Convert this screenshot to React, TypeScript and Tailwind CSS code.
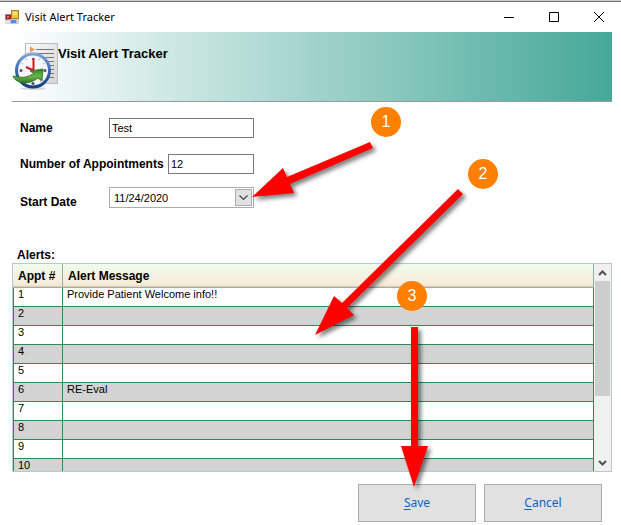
import { useState } from "react"

interface Alert {
  appt: number
  message: string
}

interface ArrowProps {
  points: string
}

const initialAlerts: Alert[] = [
  { appt: 1, message: "Provide Patient Welcome info!!" },
  { appt: 2, message: "" },
  { appt: 3, message: "" },
  { appt: 4, message: "" },
  { appt: 5, message: "" },
  { appt: 6, message: "RE-Eval" },
  { appt: 7, message: "" },
  { appt: 8, message: "" },
  { appt: 9, message: "" },
  { appt: 10, message: "" },
]

function FormIcon() {
  return (
    <svg width="14" height="14" viewBox="0 0 14 14" shapeRendering="crispEdges" aria-hidden="true">
      <rect x="0" y="4" width="6" height="6" fill="#8f8f8f" />
      <rect x="1" y="5" width="5" height="4" fill="#c90c0c" />
      <rect x="2" y="6" width="2" height="2" fill="#e87a6a" />
      <rect x="6" y="0" width="8" height="9" fill="#a5862e" />
      <rect x="7" y="1" width="6" height="7" fill="#f7c52e" />
      <rect x="8" y="2" width="4" height="3" fill="#ffe27c" />
      <rect x="0" y="10" width="5" height="4" fill="#e0e0e0" />
      <rect x="5" y="9" width="7" height="5" fill="#b5c5dc" />
      <rect x="6" y="10" width="5" height="3" fill="#4d8ee8" />
      <rect x="12" y="9" width="2" height="5" fill="#d3d3d3" />
    </svg>
  )
}

function ClockIcon() {
  return (
    <svg width="46" height="48" viewBox="0 0 46 48" aria-hidden="true">
      <defs>
        <linearGradient id="paper" x1="0" y1="0" x2="1" y2="1">
          <stop offset="0" stopColor="#fafafa" />
          <stop offset="1" stopColor="#d4d4d4" />
        </linearGradient>
        <linearGradient id="rim" x1="0" y1="0" x2="0" y2="1">
          <stop offset="0" stopColor="#7ba3dc" />
          <stop offset="0.5" stopColor="#3e68ad" />
          <stop offset="1" stopColor="#163f85" />
        </linearGradient>
        <linearGradient id="sweep" x1="0" y1="0" x2="0" y2="1">
          <stop offset="0" stopColor="#2f7d24" />
          <stop offset="0.5" stopColor="#6db64c" />
          <stop offset="1" stopColor="#2c7a22" />
        </linearGradient>
      </defs>
      <rect x="13.5" y="1.5" width="32" height="40" fill="url(#paper)" stroke="#bdbdbd" />
      <path d="M18 4.500l5 3-5 3z" fill="#f09a4a" />
      <path d="M24 7.500h18M26 11.500h16M32 15.500h10M36 19.500h6M38 23.500h4M39 27.500h3M38 31.500h4M36 35.500h6" stroke="#777" />
      <ellipse cx="21" cy="46.500" rx="13" ry="1.500" fill="#000" opacity="0.15" />
      <circle cx="21" cy="28.500" r="16.500" fill="#f5f7fb" stroke="url(#rim)" strokeWidth="3" />
      <g fill="#555">
        <circle cx="21" cy="17" r="1" />
        <circle cx="33" cy="28.500" r="1.500" />
        <circle cx="21" cy="41.500" r="1.600" />
        <circle cx="9" cy="28.500" r="1.500" />
      </g>
      <path d="M27 18l1-1.500M31 22l1.500-1M15 18l-1-1.500M11 22l-1.500-1M14 39l-1 1.500M28 39l1 1.500" stroke="#aaa" />
      <path d="M21.500 16v12M14 25l7.500 3.500" fill="none" stroke="#d31324" strokeWidth="2" />
      <path d="M1 34l6 1c6 1 10-1 15-3.500l-4-2.500 13-2-1 12-4-3c-7 5-13 6-18 4-4-1-6-3-7-6z" fill="url(#sweep)" stroke="#23691c" strokeWidth="0.800" />
    </svg>
  )
}

function Arrow({ points }: ArrowProps) {
  return <polygon points={points} fill="#ff0000" />
}

export default function App() {
  const [name, setName] = useState("Test")
  const [count, setCount] = useState("12")
  const [startDate, setStartDate] = useState("11/24/2020")

  return (
    <div className="relative overflow-hidden border-t border-[#cfcfcf] bg-white font-['Liberation_Sans',Arial,sans-serif] text-[12px] leading-[14px] text-black">
      {/* Title bar */}
      <div className="flex h-[31px] items-center border-t border-[#707070] pl-[5px]">
        <FormIcon />
        <span className="ml-[6px] flex-1 font-['Noto_Sans','Open_Sans',sans-serif] text-[11px] leading-[16px]">Visit Alert Tracker</span>
        <button type="button" aria-label="Minimize" className="flex h-[28px] w-[45px] items-center justify-center">
          <svg width="10" height="10" viewBox="0 0 10 10" stroke="#000"><path d="M0 5.500h10" /></svg>
        </button>
        <button type="button" aria-label="Maximize" className="flex h-[28px] w-[45px] items-center justify-center">
          <svg width="10" height="10" viewBox="0 0 10 10" fill="none" stroke="#000"><path d="M0.500 0.500h9v9h-9z" /></svg>
        </button>
        <button type="button" aria-label="Close" className="flex h-[28px] w-[45px] items-center justify-center">
          <svg width="10" height="10" viewBox="0 0 10 10" stroke="#000"><path d="M0 0l10 10M10 0L0 10" /></svg>
        </button>
      </div>

      <div className="pr-[9px] pl-3">
        {/* Banner */}
        <header className="flex h-[70px] items-start border-b border-[#999] bg-linear-to-r/srgb from-white to-[#45a898] pt-[10px]">
          <ClockIcon />
          <h1 className="pt-[5px] text-[13px] leading-[14px] font-bold">Visit Alert Tracker</h1>
        </header>

        {/* Form */}
        <div className="flex w-[242px] flex-col gap-4 pt-4 pl-2">
          <div className="flex h-5 items-center justify-between">
            <label htmlFor="name" className="font-bold">Name</label>
            <input
              id="name"
              value={name}
              onChange={(e) => setName(e.target.value)}
              className="h-5 w-[145px] border border-[#7a7a7a] bg-white px-[2px] text-[11px] outline-none"
            />
          </div>
          <div className="flex h-5 items-center justify-between">
            <label htmlFor="count" className="font-bold whitespace-nowrap">Number of Appointments</label>
            <input
              id="count"
              value={count}
              onChange={(e) => setCount(e.target.value)}
              className="h-5 w-[86px] border border-[#7a7a7a] bg-white px-[2px] text-[11px] outline-none"
            />
          </div>
          <div className="-mt-[3px] flex h-[21px] items-start justify-between">
            <label htmlFor="start" className="pt-2 font-bold">Start Date</label>
            <div className="relative w-[145px]">
              <select
                id="start"
                value={startDate}
                onChange={(e) => setStartDate(e.target.value)}
                className="h-[21px] w-full appearance-none border border-[#abadb3] bg-white px-1 text-[11px] outline-none"
              >
                <option>11/24/2020</option>
              </select>
              <span className="pointer-events-none absolute top-[2px] right-[2px] flex h-[17px] w-[17px] items-center justify-center border border-[#adadad] bg-[#e1e1e1]">
                <svg width="9" height="6" viewBox="0 0 9 6" fill="none" stroke="#444" strokeWidth="1.200"><path d="M0.500 0.500l4 4 4-4" /></svg>
              </span>
            </div>
          </div>
        </div>

        {/* Alerts */}
        <h2 id="alerts" className="mt-[39px] pl-[5px] text-[12px] leading-4 font-bold">Alerts:</h2>
        <div className="flex h-[209px] overflow-hidden border border-[#b9c7d6]">
          <div className="min-w-0 flex-1 overflow-hidden">
            <table aria-labelledby="alerts" className="w-full table-fixed border-separate border-spacing-0 text-left">
              <thead>
                <tr className="h-6">
                  <th className="w-[50px] border-r border-b border-[#8fb0a4] bg-[linear-gradient(#f0fcec,#f8ebd8_90%,#e5ccb4)] p-0 pl-[5px] whitespace-nowrap">Appt #</th>
                  <th className="border-r border-b border-[#8fb0a4] bg-[linear-gradient(#f0fcec,#f8ebd8_90%,#e5ccb4)] p-0 pl-[5px]">Alert Message</th>
                </tr>
              </thead>
              <tbody className="text-[11px] leading-3">
                {initialAlerts.map((alert) => (
                  <tr key={alert.appt} className="h-[19px] odd:bg-white even:bg-[#d3d3d3]">
                    <td className="border-r border-b border-l border-[#2e8b57] p-0 pl-1 align-top">{alert.appt}</td>
                    <td className="border-r border-b border-[#2e8b57] p-0 pl-1 align-top">{alert.message}</td>
                  </tr>
                ))}
              </tbody>
            </table>
          </div>
          <div className="flex w-[17px] flex-col items-center bg-[#f0f0f0]">
            <span className="flex h-[17px] items-center">
              <svg width="9" height="6" viewBox="0 0 9 6" fill="none" stroke="#505050" strokeWidth="2"><path d="M1 5l3.500-3.500L8 5" /></svg>
            </span>
            <span className="h-[115px] w-[15px] bg-[#cdcdcd]" />
            <span className="mt-auto flex h-[17px] items-center">
              <svg width="9" height="6" viewBox="0 0 9 6" fill="none" stroke="#505050" strokeWidth="2"><path d="M1 1l3.500 3.500L8 1" /></svg>
            </span>
          </div>
        </div>

        {/* Actions */}
        <div className="flex justify-end gap-2 pt-3 pr-[10px] pb-[2px] font-['Noto_Sans','Open_Sans',sans-serif] text-[12px] text-[#0a64c8]">
          <button type="button" className="h-[38px] w-[118px] border border-[#adadad] bg-[#e1e1e1]">
            <span className="underline underline-offset-2">S</span>ave
          </button>
          <button type="button" className="h-[38px] w-[118px] border border-[#adadad] bg-[#e1e1e1]">
            <span className="underline underline-offset-2">C</span>ancel
          </button>
        </div>
      </div>

      {/* Step callouts */}
      <svg className="pointer-events-none absolute -top-px left-0 drop-shadow-[3px_3px_2px_rgba(0,0,0,0.5)]" width="621" height="525" viewBox="0 0 621 525" aria-hidden="true">
        <Arrow points="252,197 283,168 287,177 370,142 373,148 290,184 294,193" />
        <Arrow points="315,335 334,296 342,303 458,189 463,194 347,308 354,315" />
        <Arrow points="411,327 418,327 418,446 428,446 414,487 401,446 411,446" />
      </svg>
      <span className="absolute top-[106px] left-[371px] flex size-[30px] items-center justify-center rounded-full bg-[#ff8000] text-[16px] text-white">1</span>
      <span className="absolute top-[158px] left-[468px] flex size-[30px] items-center justify-center rounded-full bg-[#ff8000] text-[16px] text-white">2</span>
      <span className="absolute top-[280px] left-[397px] flex size-[30px] items-center justify-center rounded-full bg-[#ff8000] text-[16px] text-white">3</span>
    </div>
  )
}
